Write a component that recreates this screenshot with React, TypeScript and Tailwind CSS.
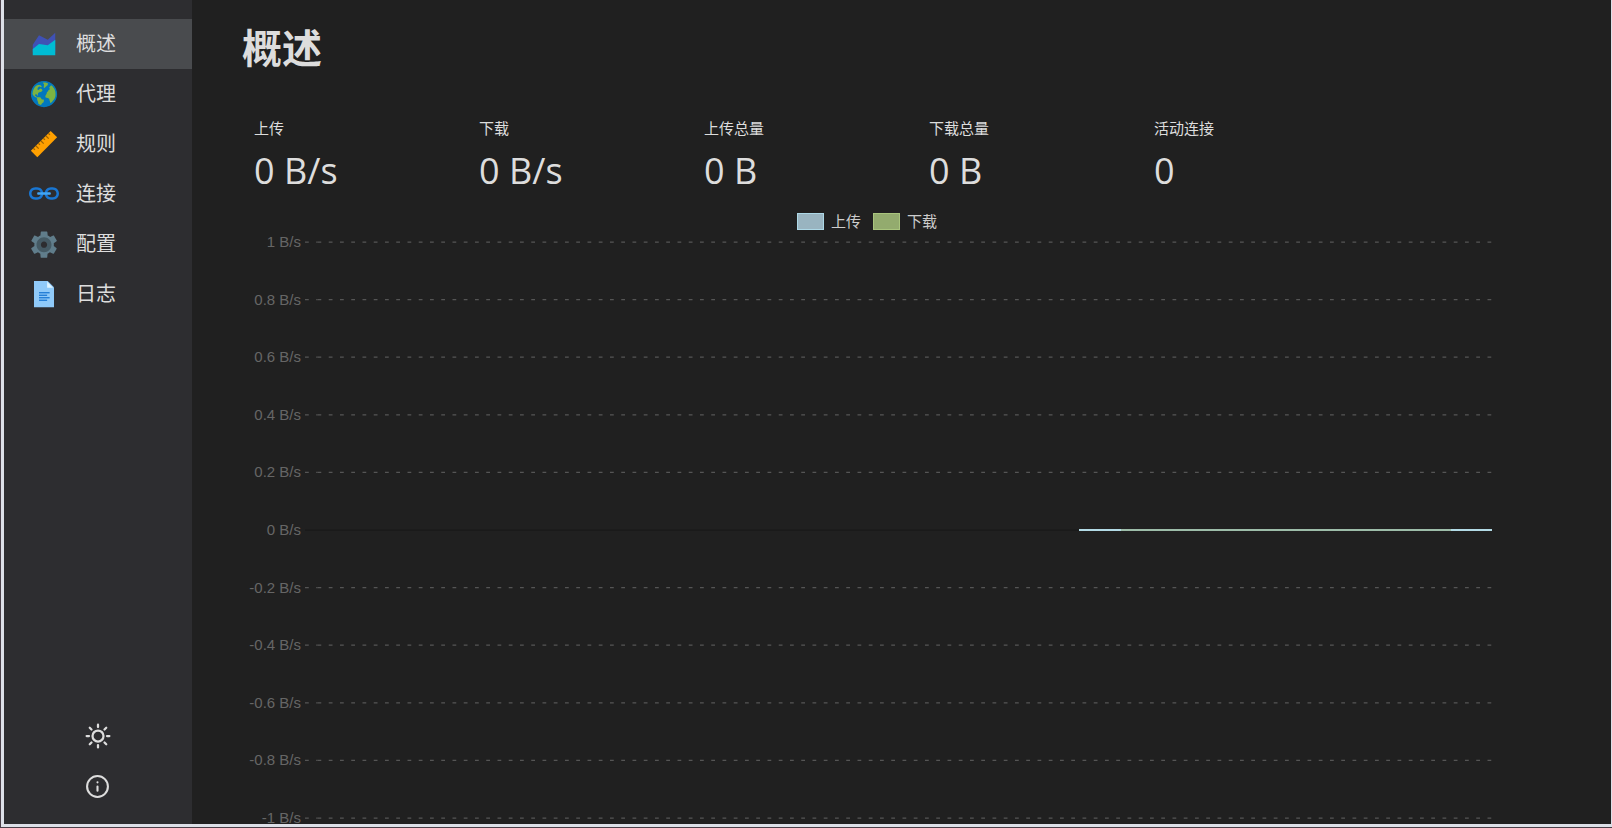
import { FcAreaChart, FcDocument, FcGlobe, FcLink, FcRuler, FcSettings } from 'react-icons/fc';

const nav = [
  { label: '概述', Icon: FcAreaChart },
  { label: '代理', Icon: FcGlobe },
  { label: '规则', Icon: FcRuler },
  { label: '连接', Icon: FcLink },
  { label: '配置', Icon: FcSettings },
  { label: '日志', Icon: FcDocument },
];

const stats = [
  ['上传', '0 B/s'],
  ['下载', '0 B/s'],
  ['上传总量', '0 B'],
  ['下载总量', '0 B'],
  ['活动连接', '0'],
];

const ticks = [1, 0.8, 0.6, 0.4, 0.2, 0, -0.2, -0.4, -0.6, -0.8, -1];
const STEP = 57.6;

function SunIcon() {
  return (
    <svg width="30" height="30" viewBox="0 0 24 24" fill="none" stroke="currentColor" strokeWidth="1.8" strokeLinecap="round">
      <circle cx="12" cy="12" r="4.4" />
      <path d="M12 2.9v1.9M12 19.2v1.9M2.9 12h1.9M19.2 12h1.9M5.4 5.4l1.4 1.4M17.2 17.2l1.4 1.4M5.4 18.6l1.4-1.4M17.2 6.8l1.4-1.4" />
    </svg>
  );
}

function InfoIcon() {
  return (
    <svg width="25" height="25" viewBox="0 0 24 24" fill="none" stroke="currentColor" strokeWidth="2" strokeLinecap="round" strokeLinejoin="round">
      <circle cx="12" cy="12" r="10" />
      <path d="M12 16v-4M12 8h.01" />
    </svg>
  );
}

function Sidebar() {
  return (
    <aside className="flex w-[188px] shrink-0 flex-col bg-[#2d2d30] pt-[19px]">
      <nav>
        {nav.map(({ label, Icon }, i) => (
          <a
            key={label}
            href="#"
            aria-current={i === 0 ? 'page' : undefined}
            className={`flex h-[50px] items-center gap-[17px] pl-[25px] text-[20px] leading-[30px] ${i === 0 ? 'bg-[#494b4e]' : ''}`}
          >
            <Icon size={30} />
            <span>{label}</span>
          </a>
        ))}
      </nav>
      <div className="mt-auto flex flex-col items-center pr-px pb-[13px]">
        <button aria-label="切换主题" className="flex h-[50px] w-[50px] items-center justify-center">
          <SunIcon />
        </button>
        <a href="#" aria-label="关于" className="flex h-[50px] w-[50px] items-center justify-center">
          <InfoIcon />
        </a>
      </div>
    </aside>
  );
}

function TrafficChart() {
  return (
    <section>
      <div className="flex h-[30px] items-center justify-center gap-3 text-[15px] leading-5 text-[#ccc]">
        <span className="flex items-center gap-[7px]">
          <span className="h-[17px] w-[27px] border border-[#add8e6] bg-[#99b4c0]" />
          上传
        </span>
        <span className="flex items-center gap-[7px]">
          <span className="h-[17px] w-[27px] border border-[#a9c57d] bg-[#93ab6e]" />
          下载
        </span>
      </div>
      <div className="flex gap-1">
        <div className="-mt-[4px] flex h-[596px] w-[59px] shrink-0 flex-col justify-between text-right font-['Liberation_Sans',sans-serif] text-[15px] leading-5 text-[#666]">
          {ticks.map((t) => (
            <span key={t} className="whitespace-nowrap">{t} B/s</span>
          ))}
        </div>
        <svg className="h-[596px] min-w-0 flex-1" aria-hidden="true">
          {ticks.map((t, i) => {
            const y = 6 + i * STEP;
            return t === 0 ? (
              <line key={t} x1="0" x2="100%" y1={y} y2={y} stroke="#191919" strokeWidth="1.25" />
            ) : (
              <g key={t} stroke="#555" strokeWidth="1.25" strokeDasharray="3.75 7.5">
                <line x1="0" x2="12.5" y1={y} y2={y} />
                <line x1="12.5" x2="100%" y1={y} y2={y} />
              </g>
            );
          })}
          <svg x="100%" y="293" overflow="visible">
            <rect x="-413" y="0" width="413" height="2" fill="#b3dbe6" />
            <rect x="-371" y="0" width="330" height="2" fill="#9dbda9" />
          </svg>
        </svg>
      </div>
    </section>
  );
}

export default function App() {
  return (
    <div className="flex h-screen overflow-hidden border-b border-l border-[#4a4048] bg-[#dde0e8] pr-px pb-[3px] pl-[3px] font-['Open_Sans','Noto_Sans_CJK_SC',sans-serif] text-[#ddd]">
      <Sidebar />
      <main className="min-w-0 flex-1 overflow-hidden bg-[#202020] pl-[50px]">
        <h1 className="flex h-[95px] items-center text-[40px] leading-[60px] font-bold">概述</h1>
        <div className="max-w-[1250px]">
          <dl className="flex flex-wrap px-3 pt-[20px]">
            {stats.map(([label, value]) => (
              <div key={label} className="w-[225px]">
                <dt className="text-[15px] leading-[27px]">{label}</dt>
                <dd className="text-[36px] leading-[58px]">{value}</dd>
              </div>
            ))}
          </dl>
          <div className="pt-[6px]">
            <TrafficChart />
          </div>
        </div>
      </main>
    </div>
  );
}
